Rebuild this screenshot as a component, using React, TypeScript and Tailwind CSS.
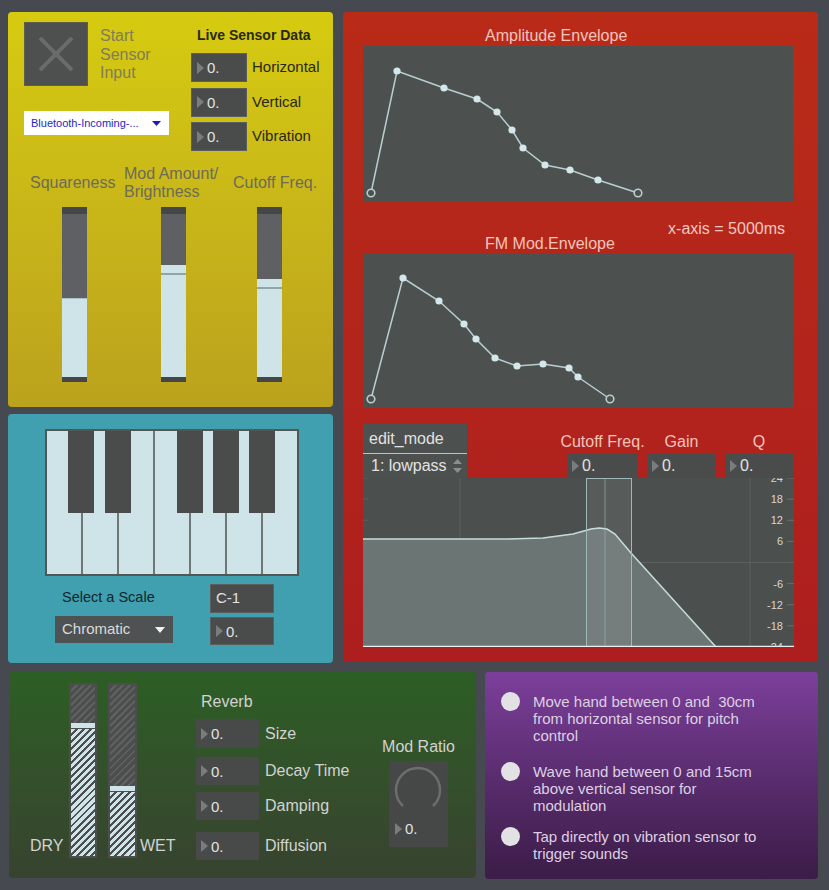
import React from "react";

// Max/MSP style synth patch – sensor controlled
type Pt = [number, number];

const AMP_ENV: Pt[] = [
  [8, 147], [34, 25], [81, 42], [114, 53], [134, 66], [149, 84],
  [160, 102], [182, 119], [207, 124], [235, 134], [275, 147],
];

const FM_ENV: Pt[] = [
  [8, 146], [40, 25], [76, 48], [101, 71], [113, 86], [132, 105],
  [154, 113], [180, 111], [206, 115], [215, 124], [247, 146],
];

const DB_LABELS = [24, 18, 12, 6, -6, -12, -18, -24];

function Tri() {
  return (
    <svg width="7" height="12" viewBox="0 0 7 12" className="shrink-0">
      <polygon points="0,0 7,6 0,12" fill="#7a7d7d" />
    </svg>
  );
}

function NumBox({ className = "", big = false }: { className?: string; big?: boolean }) {
  return (
    <div
      className={`flex items-center gap-[3px] border border-[#5b5e5d] bg-[#4a4c4b] pl-[5px] leading-none text-[#e2e2e2] ${
        big ? "text-[16px]" : "text-[15px]"
      } ${className}`}
    >
      <Tri />
      <span>0.</span>
    </div>
  );
}

function Envelope({ pts }: { pts: Pt[] }) {
  const first = pts[0];
  const last = pts[pts.length - 1];
  return (
    <svg width="430" height="155" viewBox="0 0 430 155" className="block bg-[#4c504f]">
      <polyline
        points={pts.map((p) => p.join(",")).join(" ")}
        fill="none"
        stroke="#b9ced1"
        strokeWidth="1.5"
      />
      {pts.slice(1, -1).map(([x, y], i) => (
        <circle key={i} cx={x} cy={y} r="3.6" fill="#d4e7ea" />
      ))}
      {[first, last].map(([x, y], i) => (
        <circle key={i} cx={x} cy={y} r="3.8" fill="#4c504f" stroke="#b9ced1" strokeWidth="1.6" />
      ))}
    </svg>
  );
}

function VSlider({ fillFrom, handle }: { fillFrom: number; handle?: boolean }) {
  return (
    <div className="flex h-[175px] w-[25px] flex-col">
      <div className="h-[7px] bg-[#454746]" />
      <div className="flex flex-1 flex-col bg-[#5e6064]">
        <div style={{ height: fillFrom - 7 }} />
        {handle ? (
          <>
            <div className="h-[8px] bg-[#cfe4e8]" />
            <div className="h-[1.5px] bg-[#8ea6aa]" />
          </>
        ) : (
          <div className="h-[1px] bg-[#a9c0c4]" />
        )}
        <div className="flex-1 bg-[#cfe4e8]" />
      </div>
      <div className="h-[5px] bg-[#454746]" />
    </div>
  );
}

function HatchSlider({ handleAt, w }: { handleAt: number; w: string }) {
  return (
    <div className={`flex h-[175px] flex-col border-2 border-[#4b4e4d] ${w}`}>
      <div
        style={{ height: handleAt }}
        className="bg-[repeating-linear-gradient(135deg,#4b4e4d_0px,#4b4e4d_3px,#5e6160_3px,#5e6160_5px)]"
      />
      <div className="h-[5px] bg-[#cfe4e8]" />
      <div className="h-[1px] bg-[#4b4e4d]" />
      <div className="flex-1 bg-[repeating-linear-gradient(135deg,#cfe4e8_0px,#cfe4e8_3px,#4b4e4d_3px,#4b4e4d_5px)]" />
    </div>
  );
}

function FilterGraph() {
  const yOf = (d: number) => 84.5 - d * (84.5 / 24);
  const curve =
    "M0,61 L144,61 L180,60 L210,56 L228,51 L236,50 L244,51 L252,56 L268,75 L353,169";
  return (
    <svg width="431" height="169" viewBox="0 0 431 169" className="block bg-[#4b4f4e]">
      <line x1="97" y1="0" x2="97" y2="169" stroke="#5c605f" />
      <line x1="387" y1="0" x2="387" y2="169" stroke="#5c605f" />
      <line x1="0" y1="84.5" x2="431" y2="84.5" stroke="#5c605f" />
      {DB_LABELS.map((d) => (
        <g key={d}>
          <line x1="0" y1={yOf(d)} x2="5" y2={yOf(d)} stroke="#5c605f" />
          <line x1="424" y1={yOf(d)} x2="431" y2={yOf(d)} stroke="#6b6f6e" />
          <text
            x="420"
            y={yOf(d) + 4}
            textAnchor="end"
            fontSize="11"
            fill="#d6d6d6"
            fontFamily="'Liberation Sans', Arial, sans-serif"
          >
            {d}
          </text>
        </g>
      ))}
      <path d={`${curve} L0,169 Z`} fill="#6b7573" />
      <path d={curve} fill="none" stroke="#c6dcdc" strokeWidth="1.5" />
      <rect x="223.5" y="0.5" width="45" height="168" fill="#ffffff" fillOpacity="0.07" stroke="#9fb9b9" />
      <line x1="242" y1="0" x2="242" y2="169" stroke="#9fb9b9" strokeOpacity="0.6" />
      <line x1="0" y1="168.5" x2="431" y2="168.5" stroke="#e8f0f0" strokeWidth="1.5" />
    </svg>
  );
}

function YellowPanel() {
  return (
    <section className="h-[395px] rounded-[4px] bg-linear-to-b from-[#d6cb10] to-[#bba21d] pl-[16px] pt-[10px]">
      <div className="flex">
        <div className="w-[167px]">
          <div className="flex">
            <div className="flex h-[64px] w-[64px] items-center justify-center border border-[#5d5f4e] bg-[#4d504f]">
              <svg width="34" height="34" viewBox="0 0 34 34">
                <path d="M1 1 L33 33 M33 1 L1 33" stroke="#696c6b" strokeWidth="4" />
              </svg>
            </div>
            <p className="ml-[12px] mt-[5px] text-[16px] leading-[18.5px] text-[#807c58]">
              Start
              <br />
              Sensor
              <br />
              Input
            </p>
          </div>
          <div className="mt-[25px] flex h-[24px] w-[145px] items-center justify-between bg-white pl-[7px] pr-[8px] text-[11px] text-[#2626c8]">
            <span>Bluetooth-Incoming-...</span>
            <svg width="9" height="5" viewBox="0 0 9 5">
              <polygon points="0,0 9,0 4.5,5" fill="#1c1cbe" />
            </svg>
          </div>
        </div>
        <div>
          <p className="ml-[6px] mt-[4.5px] text-[14px] font-bold leading-[17px] text-[#28280e]">
            Live Sensor Data
          </p>
          <div className="mt-[9.5px] flex flex-col gap-[5.5px]">
            {["Horizontal", "Vertical", "Vibration"].map((l) => (
              <div key={l} className="flex items-center">
                <NumBox className="h-[29px] w-[56px]" />
                <span className="ml-[5px] text-[15px] text-[#28280e]">{l}</span>
              </div>
            ))}
          </div>
        </div>
      </div>

      <div className="ml-[6px] mt-[14px] grid grid-cols-[94px_109px_auto] items-center text-[16px] leading-[18px] text-[#6d6b58]">
        <span>Squareness</span>
        <span>
          Mod Amount/
          <br />
          Brightness
        </span>
        <span>Cutoff Freq.</span>
      </div>

      <div className="ml-[38px] mt-[6px] flex">
        <VSlider fillFrom={91} />
        <div className="ml-[74px]">
          <VSlider fillFrom={58} handle />
        </div>
        <div className="ml-[71px]">
          <VSlider fillFrom={72} handle />
        </div>
      </div>
    </section>
  );
}

function BluePanel() {
  const blackKeys = ["left-[21px]", "left-[58px]", "left-[130px]", "left-[166px]", "left-[202px]"];
  return (
    <section className="h-[249px] rounded-[4px] bg-[#41a0b0] pt-[15px]">
      <div className="relative ml-[37px] flex h-[147px] w-[254px] border-2 border-[#525755] bg-[#cfe4e8]">
        {Array.from({ length: 7 }).map((_, i) => (
          <div key={i} className={`flex-1 ${i > 0 ? "border-l-2 border-[#6f7878]" : ""}`} />
        ))}
        {blackKeys.map((k) => (
          <div key={k} className={`absolute top-0 h-[82px] w-[26px] bg-[#4a4c4b] ${k}`} />
        ))}
      </div>

      <div className="mt-[8px] flex">
        <div className="ml-[47px]">
          <p className="ml-[7px] mt-[4.5px] text-[14.5px] leading-[17px] text-[#10262c]">Select a Scale</p>
          <div className="mt-[10.5px] flex h-[27px] w-[118px] items-center justify-between bg-[#4f5252] pl-[7px] pr-[8px] text-[15px] text-[#dadada]">
            <span>Chromatic</span>
            <svg width="10" height="6" viewBox="0 0 10 6">
              <polygon points="0,0 10,0 5,6" fill="#f2f2f2" />
            </svg>
          </div>
        </div>
        <div className="ml-[37px] flex flex-col gap-[4px]">
          <div className="flex h-[29px] w-[64px] items-center border border-[#5b5e5d] bg-[#4a4c4b] pl-[5px] text-[15px] text-[#e2e2e2]">
            C-1
          </div>
          <NumBox className="h-[28px] w-[64px]" />
        </div>
      </div>
    </section>
  );
}

function RedPanel() {
  return (
    <section className="h-[650px] w-[475px] rounded-[4px] bg-linear-to-b from-[#b92b17] to-[#ad1e1f] px-[20px] pt-[15px]">
      <p className="ml-[122px] text-[16px] leading-[18px] text-[#f3c4bc]">Amplitude Envelope</p>
      <div className="mt-[1px]">
        <Envelope pts={AMP_ENV} />
      </div>
      <p className="mr-[13px] mt-[19.5px] text-right text-[16px] leading-[15px] text-[#f3c8c0]">x-axis = 5000ms</p>
      <p className="ml-[122px] text-[16px] leading-[15px] text-[#f3c4bc]">FM Mod.Envelope</p>
      <div className="mt-[2.5px]">
        <Envelope pts={FM_ENV} />
      </div>

      <div className="mt-[16px] flex items-end">
        <div className="w-[104px] text-[16px] text-[#e2e2e2]">
          <div className="flex h-[30px] items-center border-b border-[#b9c6c6] bg-[#4c504f] pl-[6px]">edit_mode</div>
          <div className="flex h-[24px] items-center justify-between bg-[#4c504f] pl-[8px] pr-[5px]">
            <span>1: lowpass</span>
            <svg width="9" height="16" viewBox="0 0 9 16">
              <polygon points="0,6 9,6 4.5,1" fill="#8b8f8f" />
              <polygon points="0,10 9,10 4.5,15" fill="#8b8f8f" />
            </svg>
          </div>
        </div>
        <div className="ml-[100px] flex gap-[9px] text-[16px] leading-[17px] text-[#f3c4bc]">
          {[
            { l: "Cutoff Freq.", w: "w-[71px]" },
            { l: "Gain", w: "w-[69px]" },
            { l: "Q", w: "w-[68px]" },
          ].map((c) => (
            <div key={c.l} className={`flex flex-col items-center ${c.w}`}>
              <span className="whitespace-nowrap">{c.l}</span>
              <NumBox big className="mt-[4.5px] h-[24px] w-full border-none" />
            </div>
          ))}
        </div>
      </div>
      <FilterGraph />
    </section>
  );
}

function GreenPanel() {
  return (
    <section className="flex h-[206px] w-[467px] rounded-[4px] bg-linear-to-b from-[#2c5e24] to-[#37432f] pl-[21px] pt-[11px] text-[#d2d2d2]">
      <span className="mt-[154px] w-[39px] text-[16px] leading-[18px]">DRY</span>
      <HatchSlider handleAt={38} w="w-[28px]" />
      <div className="ml-[11px]">
        <HatchSlider handleAt={101} w="w-[29px]" />
      </div>
      <span className="ml-[3px] mt-[154px] w-[56px] text-[16px] leading-[18px]">WET</span>

      <div className="w-[193px]">
        <p className="ml-[5px] mt-[9.5px] text-[16px] leading-[17px]">Reverb</p>
        {[
          { l: "Size", mt: "mt-[9.5px]", h: "h-[29px]" },
          { l: "Decay Time", mt: "mt-[9px]", h: "h-[28px]" },
          { l: "Damping", mt: "mt-[7px]", h: "h-[28px]" },
          { l: "Diffusion", mt: "mt-[12px]", h: "h-[28px]" },
        ].map((r) => (
          <div key={r.l} className={`flex items-center ${r.mt}`}>
            <NumBox className={`${r.h} w-[63px] border-none bg-[#474a49]`} />
            <span className="ml-[6px] text-[16px]">{r.l}</span>
          </div>
        ))}
      </div>

      <div className="flex w-[59px] flex-col items-center">
        <p className="mt-[54.5px] whitespace-nowrap text-[16px] leading-[17px]">Mod Ratio</p>
        <div className="mt-[6.5px] h-[86px] w-[59px] bg-[#454847]">
          <svg width="59" height="60" viewBox="0 0 59 60" className="block">
            <path d="M14 45 A22 22 0 1 1 44 45" fill="none" stroke="#6a6e6e" strokeWidth="2.5" />
          </svg>
          <div className="flex items-center gap-[3px] pl-[6px] text-[15px] leading-none text-[#e2e2e2]">
            <Tri />
            <span>0.</span>
          </div>
        </div>
      </div>
    </section>
  );
}

function PurplePanel() {
  const items = [
    { mt: "mt-[21px]", lines: ["Move hand between 0 and\u00a0 30cm", "from horizontal sensor for pitch", "control"] },
    { mt: "mt-[19px]", lines: ["Wave hand between 0 and 15cm", "above vertical sensor for", "modulation"] },
    { mt: "mt-[13.5px]", lines: ["Tap directly on vibration sensor to", "trigger sounds"] },
  ];
  return (
    <section className="h-[207px] w-[333px] rounded-[4px] bg-linear-to-b from-[#7c3f9b] to-[#3b1c47] pl-[16px]">
      {items.map((it, i) => (
        <div key={i} className={`flex items-start ${it.mt}`}>
          <div className="mt-[-1px] h-[19px] w-[19px] shrink-0 rounded-full bg-[#e2e2e4]" />
          <p className="ml-[13px] whitespace-nowrap text-[15px] leading-[17px] text-[#ddd0e3]">
            {it.lines.map((ln, j) => (
              <React.Fragment key={j}>
                {j > 0 && <br />}
                {ln}
              </React.Fragment>
            ))}
          </p>
        </div>
      ))}
    </section>
  );
}

export default function App() {
  return (
    <div className="min-h-screen bg-[#464a50] pl-[8px] pt-[12px] font-['Liberation_Sans',Arial,sans-serif]">
      <div className="flex gap-[10px]">
        <div className="flex w-[325px] flex-col gap-[7px]">
          <YellowPanel />
          <BluePanel />
        </div>
        <RedPanel />
      </div>
      <div className="ml-[1px] mt-[9px] flex gap-[9px]">
        <GreenPanel />
        <PurplePanel />
      </div>
    </div>
  );
}
